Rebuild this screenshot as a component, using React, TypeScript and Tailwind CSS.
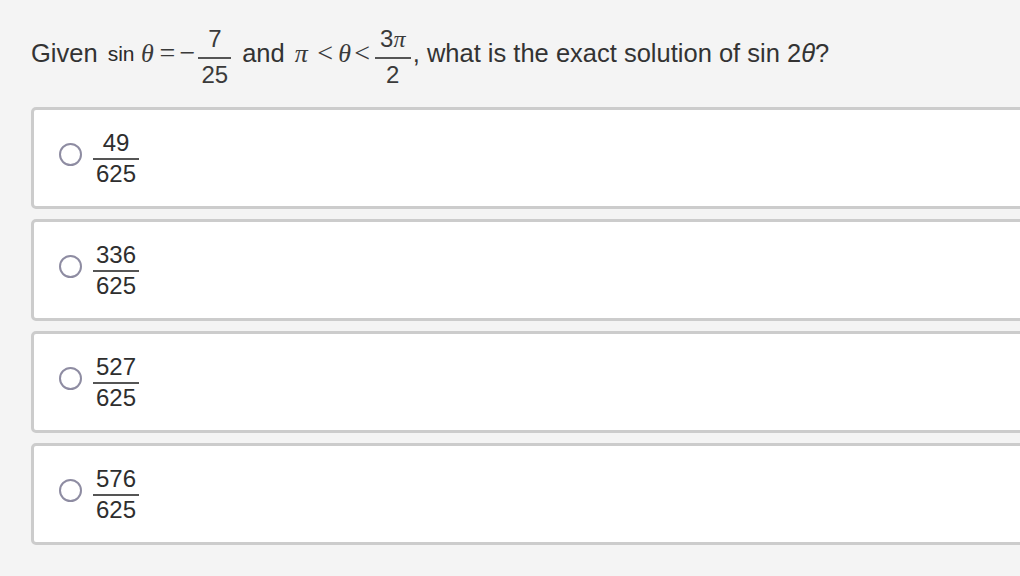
import type { ReactNode } from 'react'

const sans = { fontFamily: '"Liberation Sans", Arial, sans-serif' }
const serif = { fontFamily: '"Liberation Serif", "Times New Roman", serif' }

interface FracProps {
  num: ReactNode
  den: ReactNode
  className?: string
  numClass?: string
  denClass?: string
}

function Frac({ num, den, className = '', numClass = '', denClass = '' }: FracProps) {
  return (
    <span className={`inline-flex flex-col items-center text-[24px] leading-[24px] ${className}`} style={sans}>
      <span className={`px-[3px] ${numClass}`}>{num}</span>
      <span className="block h-[2px] w-full bg-[#555]" />
      <span className={`px-[3px] ${denClass}`}>{den}</span>
    </span>
  )
}

// math glyph box, centred so the glyph sits where the reference has it
function M({ children, className = '' }: { children: ReactNode; className?: string }) {
  return (
    <span className={`inline-flex justify-center text-[#3a3a3a] ${className}`} style={serif}>
      {children}
    </span>
  )
}

const letter = 'pb-[7px] text-[26px] leading-[26px] italic'
const op = 'pb-[9px] text-[28px] leading-[28px]'

const answers = [
  { num: '49', den: '625' },
  { num: '336', den: '625' },
  { num: '527', den: '625' },
  { num: '576', den: '625' },
]

export default function App() {
  return (
    <div className="w-screen h-screen overflow-hidden bg-[#f4f4f4] text-[#333]" style={sans}>
      {/* question */}
      <div className="flex items-center pt-[27px] pl-[31px] whitespace-nowrap">
        <span className="pb-[7px] text-[25.5px] leading-[25px]">Given</span>
        <span className="ml-[10px] pb-[7px] text-[21px] leading-[25px] text-[#2a2a2a]">sin</span>
        <M className={`ml-[4px] w-[18px] ${letter}`}>θ</M>
        <M className={`ml-[3px] w-[16px] ${op}`}>=</M>
        <M className={`ml-[4px] w-[16px] ${op}`}>−</M>
        <Frac num="7" den="25" className="ml-[3px] text-[#3a3a3a]" numClass="mb-[6px]" denClass="mt-[4px]" />
        <span className="ml-[11px] pb-[7px] text-[25.5px] leading-[25px]">and</span>
        <M className={`ml-[8px] w-[17px] ${letter}`}>π</M>
        <M className={`ml-[7px] w-[17px] ${op}`}>&lt;</M>
        <M className={`ml-[2px] w-[18px] ${letter}`}>θ</M>
        <M className={`w-[17px] ${op}`}>&lt;</M>
        <Frac
          num={
            <>
              3<span className="italic" style={serif}>π</span>
            </>
          }
          den="2"
          className="ml-[4px] w-[36px] text-[#3a3a3a]"
          numClass="mb-[6px]"
          denClass="mt-[4px]"
        />
        <span className="ml-[2px] pb-[7px] text-[25.5px] leading-[25px]">
          , what is the exact solution of sin 2<i>θ</i>?
        </span>
      </div>

      {/* choices */}
      <div className="mt-[20px] pl-[31px] flex flex-col gap-[10px]">
        {answers.map((a) => (
          <div
            key={a.num}
            className="w-[1010px] h-[102px] shrink-0 flex items-center pl-[25px] bg-white border-[3px] border-[#cccccc] rounded-[5px]"
          >
            <span className="mb-[7px] w-[23px] h-[23px] rounded-full border-[2.5px] border-[#8e8ca2] bg-white" />
            <Frac num={a.num} den={a.den} className="ml-[11px] text-[#2e2e2e]" numClass="mb-[3px]" denClass="mt-[2px]" />
          </div>
        ))}
      </div>
    </div>
  )
}
